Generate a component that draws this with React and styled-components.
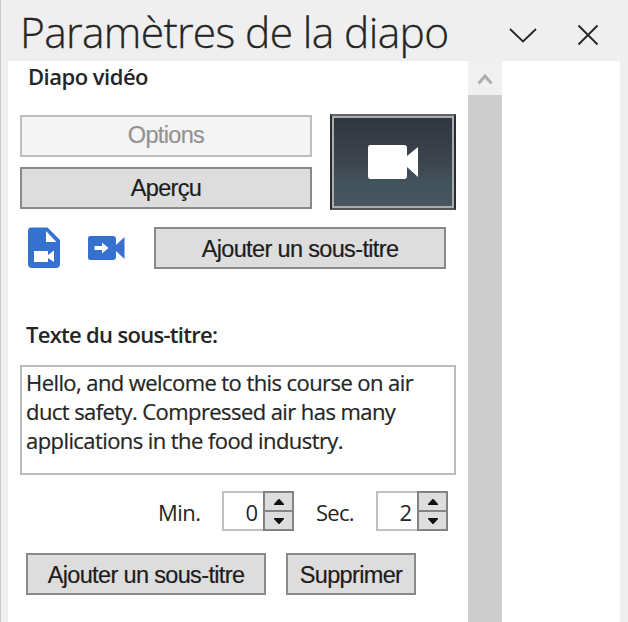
import React, { useState } from 'react';
import styled, { createGlobalStyle } from 'styled-components';

const GlobalStyle = createGlobalStyle`
  * {
    box-sizing: border-box;
  }
  body {
    margin: 0;
    background-color: #efefef;
    overflow: hidden;
  }
`;

const Pane = styled.div`
  display: flex;
  flex-direction: column;
  width: 628px;
  height: 622px;
  padding: 0 8px 0 7px;
  border-left: 1px solid #c8c8c8;
  background-color: #efefef;
  font-family: 'Open Sans', 'Noto Sans', sans-serif;
  color: #252525;
`;

const Header = styled.header`
  display: flex;
  align-items: center;
  height: 61px;
  padding-left: 12px;
`;

const Title = styled.h1`
  flex: none;
  width: 488px;
  margin: 0;
  padding-top: 1px;
  font-size: 42.5px;
  font-weight: 300;
  line-height: 61px;
  letter-spacing: -0.65px;
  -webkit-text-stroke: 0.3px #252525;
  white-space: nowrap;
`;

const HeaderButton = styled.button`
  display: flex;
  flex: none;
  width: 30px;
  height: 30px;
  margin-right: ${(props) => props.$gap || 0}px;
  margin-top: 8px;
  padding: 0;
  border: 0;
  background: none;
`;

const Body = styled.div`
  display: flex;
  height: 561px;
  background-color: #fff;
`;

const Content = styled.main`
  width: 460px;
  padding: 0 12px;
`;

const ScrollBar = styled.div`
  width: 34px;
  background-color: #cdcdcd;
`;

const ScrollUp = styled.div`
  height: 34px;
  background-color: #f0f0f0;
`;

const Label = styled.h2`
  height: 30px;
  margin: ${(props) => props.$top || 0}px 0 0 ${(props) => props.$indent}px;
  font-size: 22px;
  font-weight: 600;
  line-height: ${(props) => props.$line}px;
  letter-spacing: ${(props) => props.$spacing}px;
  white-space: nowrap;
`;

const TopRow = styled.div`
  display: flex;
  gap: 18px;
  height: 96px;
  margin-top: 23px;
`;

const Stack = styled.div`
  display: flex;
  flex-direction: column;
  gap: 10px;
  padding-top: 1px;
`;

const Button = styled.button`
  flex: none;
  width: ${(props) => props.$width}px;
  height: 42px;
  padding: ${(props) => props.$drop || 0}px 0 0;
  border: 2px solid #8a8a8a;
  background-color: #dddddd;
  font-family: 'Liberation Sans', Arial, sans-serif;
  font-size: 23.5px;
  line-height: 36px;
  letter-spacing: -0.65px;
  color: #1c1c1c;
  -webkit-text-stroke: 0.2px currentColor;
  white-space: nowrap;
  &:disabled {
    padding-bottom: 2px;
    border-color: #bcbfc0;
    background-color: #f4f4f4;
    color: #929292;
  }
`;

const VideoTile = styled.div`
  display: flex;
  align-items: center;
  justify-content: center;
  width: 126px;
  height: 96px;
  border: 2px solid #2a2c2e;
  border-top-color: #626665;
  border-bottom-color: #515554;
  box-shadow: inset 0 0 0 2px #a9adae;
  background: linear-gradient(#2d343c, #3d454e 50%, #42535b 72%, #48565f);
`;

const ActionRow = styled.div`
  display: flex;
  align-items: center;
  height: 42px;
  margin-top: 17px;
  padding-left: 7px;
`;

const IconSlot = styled.span`
  display: flex;
  flex: none;
  width: ${(props) => props.$width}px;
`;

const Caption = styled.textarea`
  display: block;
  width: 436px;
  height: 110px;
  margin-top: 15px;
  padding: 1px 4px;
  border: 2px solid #bcbcc0;
  border-radius: 0;
  background: #fff;
  color: #252525;
  font-family: inherit;
  font-size: 22px;
  line-height: 29px;
  letter-spacing: -0.58px;
  -webkit-text-stroke: 0.2px currentColor;
  resize: none;
  outline: 0;
  overflow: hidden;
  white-space: pre;
`;

const TimeRow = styled.div`
  display: flex;
  height: 40px;
  margin-top: 16px;
  padding-left: 138px;
`;

const TimeLabel = styled.span`
  width: ${(props) => props.$width}px;
  font-size: 22px;
  line-height: 43px;
  letter-spacing: ${(props) => props.$spacing}px;
`;

const Spinner = styled.div`
  display: flex;
  width: 72px;
  height: 40px;
  margin-right: ${(props) => props.$gap || 0}px;
`;

const SpinnerValue = styled.div`
  width: 41px;
  padding-right: 5px;
  border: 2px solid #c0c0c5;
  border-right: 0;
  font-size: 22px;
  line-height: 39px;
  text-align: right;
`;

const SpinnerButtons = styled.div`
  display: flex;
  flex-direction: column;
  width: 31px;
  border: 1px solid #808080;
  background-color: #808080;
`;

const Step = styled.button`
  display: flex;
  flex: 1;
  align-items: center;
  justify-content: center;
  padding: 0;
  border: 1px solid #858585;
  background-color: #dddddd;
`;

const Footer = styled.div`
  display: flex;
  gap: 20px;
  margin-top: 22px;
  padding-left: 6px;
`;

const Arrow = ({ down }) => (
  <svg width="12" height="8" viewBox="0 0 12 8">
    <path d={down ? 'M1 1H11V2L6.500 7H5.500L1 2Z' : 'M1 7H11V6L6.500 1H5.500L1 6Z'} fill="#111" />
  </svg>
);

const NumberSpinner = ({ initial, gap }) => {
  const [value, setValue] = useState(initial);
  return (
    <Spinner $gap={gap}>
      <SpinnerValue>{value}</SpinnerValue>
      <SpinnerButtons>
        <Step onClick={() => setValue(value + 1)}>
          <Arrow />
        </Step>
        <Step onClick={() => setValue(Math.max(0, value - 1))}>
          <Arrow down />
        </Step>
      </SpinnerButtons>
    </Spinner>
  );
};

const text = `Hello, and welcome to this course on air
duct safety. Compressed air has many
applications in the food industry.`;

export default function App() {
  return (
    <Pane>
      <GlobalStyle />
      <Header>
        <Title>Paramètres de la diapo</Title>
        <HeaderButton $gap={35}>
          <svg width="30" height="30" viewBox="0 0 30 30">
            <path d="M2 9L15 21.5L28 9" fill="none" stroke="#252525" strokeWidth="1.8" />
          </svg>
        </HeaderButton>
        <HeaderButton>
          <svg width="30" height="30" viewBox="0 0 30 30">
            <path d="M5.5 5.5L24.5 24.5M24.5 5.5L5.5 24.5" fill="none" stroke="#252525" strokeWidth="1.8" />
          </svg>
        </HeaderButton>
      </Header>
      <Body>
        <Content>
          <Label $indent={8} $line={30} $spacing={-0.5}>
            Diapo vidéo
          </Label>
          <TopRow>
            <Stack>
              <Button $width={292} disabled>
                Options
              </Button>
              <Button $width={292}>Aperçu</Button>
            </Stack>
            <VideoTile>
              <svg width="52" height="36" viewBox="0 0 52 36">
                <path
                  d="M3 1H37Q40 1 40 4V12L51 3V33L40 23V32Q40 35 37 35H3Q1 35 1 32V4Q1 1 3 1Z"
                  fill="#fff"
                />
              </svg>
            </VideoTile>
          </TopRow>
          <ActionRow>
            <IconSlot $width={60}>
              <svg width="34" height="42" viewBox="0 0 34 42">
                <path
                  d="M4 0.5H20.5L33 13V37Q33 41 29 41H5Q1 41 1 37V4Q1 0.5 4 0.5Z"
                  fill="#3572cf"
                />
                <path d="M19 4L29.500 15H19Z" fill="#fff" />
                <path d="M7 24H21V28L27 23.500V35L21 31V35H7Z" fill="#fff" />
              </svg>
            </IconSlot>
            <IconSlot $width={67}>
              <svg width="39" height="28" viewBox="0 0 39 28">
                <path
                  d="M3 2H26Q29 2 29 5V11L37.500 3V25L29 17V23Q29 26 26 26H3Q1 26 1 23V5Q1 2 3 2Z"
                  fill="#3572cf"
                />
                <path d="M7.500 12H15V8.500L21.500 14L15 19.500V16H7.500Z" fill="#fff" />
              </svg>
            </IconSlot>
            <Button $width={292} $drop={2}>
              Ajouter un sous-titre
            </Button>
          </ActionRow>
          <Label $top={51} $indent={6} $line={28} $spacing={-0.7}>
            Texte du sous-titre:
          </Label>
          <Caption defaultValue={text} spellCheck={false} />
          <TimeRow>
            <TimeLabel $width={64} $spacing={-0.5}>
              Min.
            </TimeLabel>
            <NumberSpinner initial={0} gap={22} />
            <TimeLabel $width={60} $spacing={-0.7}>
              Sec.
            </TimeLabel>
            <NumberSpinner initial={2} />
          </TimeRow>
          <Footer>
            <Button $width={240} $drop={2}>
              Ajouter un sous-titre
            </Button>
            <Button $width={130} $drop={2}>
              Supprimer
            </Button>
          </Footer>
        </Content>
        <ScrollBar>
          <ScrollUp>
            <svg width="34" height="34" viewBox="0 0 34 34">
              <path d="M10.500 22.500L17 15L23.500 22.500" fill="none" stroke="#adadad" strokeWidth="3" />
            </svg>
          </ScrollUp>
        </ScrollBar>
      </Body>
    </Pane>
  );
}
